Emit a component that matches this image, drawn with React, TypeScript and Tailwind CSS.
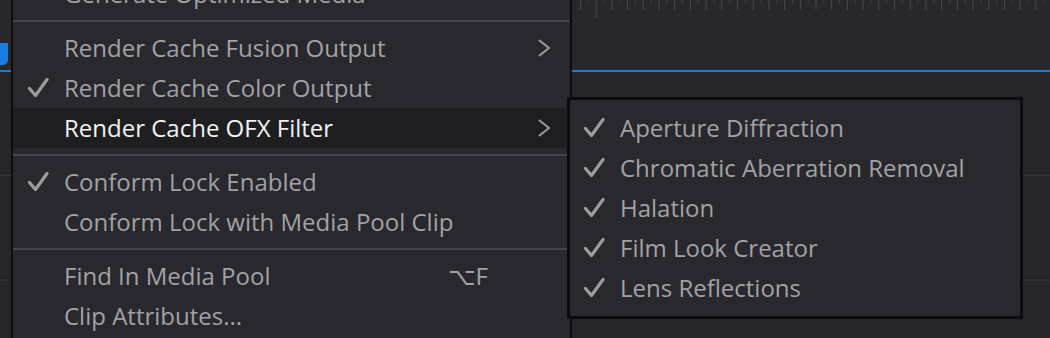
import React from "react";

const font = { fontFamily: '"Open Sans", "DejaVu Sans", sans-serif' };

const Check = () => (
    <svg width="22" height="20" viewBox="0 0 22 20" className="block">
        <path d="M2.5 10.5 L8.5 17.5 L20 1.5" fill="none" stroke="#9c9c9e" strokeWidth="3.2" strokeLinecap="round" strokeLinejoin="round" />
    </svg>
);

const Chevron = () => (
    <svg width="13" height="18" viewBox="0 0 13 18" className="block">
        <path d="M1.5 1.5 L11 9 L1.5 16.5" fill="none" stroke="#9c9c9e" strokeWidth="2" strokeLinecap="round" strokeLinejoin="round" />
    </svg>
);

type Item = {
    label: string;
    checked?: boolean;
    sub?: boolean;
    active?: boolean;
    shortcut?: string;
};

const MenuRow = ({ label, checked, sub, active, shortcut }: Item) => (
    <div className={`flex items-center h-[40px] pl-[14px] pr-[19px] ${active ? "bg-[#1e1e21] text-[#f2f2f2]" : "text-[#a2a2a4]"}`}>
        <span className="w-[37px] flex items-center">{checked && <Check />}</span>
        <span className="whitespace-nowrap">{label}</span>
        {shortcut && <span className="ml-auto mr-[63px] whitespace-nowrap">{shortcut}</span>}
        {sub && <span className="ml-auto"><Chevron /></span>}
    </div>
);

const Sep = () => (
    <div className="py-[6px]">
        <div className="h-[2px] bg-[#44454a]" />
    </div>
);

const Ruler = () => {
    const ticks = Array.from({ length: 31 }, (_, i) => 8 + i * 15.7);
    return (
        <svg width="478" height="20" className="block">
            {ticks.map((x, i) => (
                <g key={i}>
                    <rect x={x} y={0} width={1} height={i === 1 ? 18 : 10} fill="#46474c" />
                    <rect x={x + 7.85} y={0} width={1} height={4} fill="#3c3d42" />
                </g>
            ))}
        </svg>
    );
};

const subItems = [
    "Aperture Diffraction",
    "Chromatic Aberration Removal",
    "Halation",
    "Film Look Creator",
    "Lens Reflections",
];

const App = () => {
    return (
        <div className="relative w-[1050px] h-[338px] overflow-hidden bg-[#26252a] text-[24px]" style={font}>
            {/* timeline behind the menus */}
            <div className="flex flex-col">
                <div className="relative h-[70px] bg-[#28272c] flex">
                    <div className="w-[572px]" />
                    <Ruler />
                    <div className="absolute left-0 top-[43px] w-[8px] h-[22px] bg-[#1a7ee0] rounded-br-[5px]" />
                </div>
                <div className="h-[2px] bg-[#1a7ad8]" />
                <div className="h-[101px]" />
                <div className="h-[1px] bg-[#1e1e21]" />
                <div className="h-[2px] bg-[#2f2f34]" />
                <div className="h-[102px]" />
                <div className="h-[1px] bg-[#1e1e21]" />
                <div className="h-[2px] bg-[#2f2f34]" />
            </div>

            {/* context menu */}
            <div className="absolute left-[11px] top-[-26px] w-[561px] border-x-2 border-[#0c0c0d] bg-[#29282e] pb-[20px]">
                <MenuRow label="Generate Optimized Media" />
                <Sep />
                <MenuRow label="Render Cache Fusion Output" sub />
                <MenuRow label="Render Cache Color Output" checked />
                <MenuRow label="Render Cache OFX Filter" sub active />
                <Sep />
                <MenuRow label="Conform Lock Enabled" checked />
                <MenuRow label="Conform Lock with Media Pool Clip" />
                <Sep />
                <MenuRow label="Find In Media Pool" shortcut="⌥F" />
                <MenuRow label="Clip Attributes..." />
            </div>

            {/* submenu */}
            <div className="absolute left-[567px] top-[97px] w-[456px] border-[3px] border-[#0c0c0d] bg-[#29282e] py-[8px]">
                {subItems.map((s) => (
                    <div key={s} className="flex items-center h-[40px] pl-[13px] text-[#a2a2a4]">
                        <span className="w-[37px] flex items-center"><Check /></span>
                        <span className="whitespace-nowrap">{s}</span>
                    </div>
                ))}
            </div>
        </div>
    );
};

export default App;
